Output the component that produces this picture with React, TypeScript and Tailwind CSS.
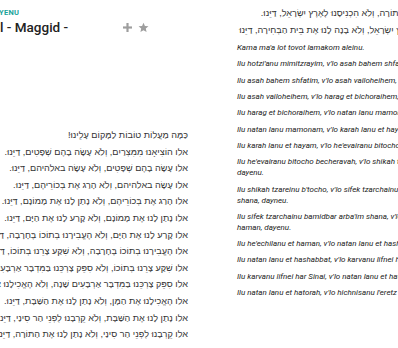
import React from "react"

const hebrewMain = [
  "כַּמָּה מַעֲלוֹת טוֹבוֹת לַמָּקוֹם עָלֵינוּ!",
  "אלו הוֹצִיאָנוּ מִמִּצְרַיִם, וְלֹא עָשָׂה בָהֶם שְׁפָטִים, דַּיֵּנוּ.",
  "אלו עָשָׂה בָהֶם שְׁפָטִים, וְלֹא עָשָׂה באלהיהם, דַּיֵּנוּ.",
  "אלו עָשָׂה באלהיהם, וְלֹא הָרַג אֶת בְּכוֹרֵיהֶם, דַּיֵּנוּ.",
  "אלו הָרַג אֶת בְּכוֹרֵיהֶם, וְלֹא נָתַן לָנוּ אֶת מָמוֹנָם, דַּיֵּנוּ.",
  "אלו נָתַן לָנוּ אֶת מָמוֹנָם, וְלֹא קָרַע לָנוּ אֶת הַיָּם, דַּיֵּנוּ.",
  "אלו קָרַע לָנוּ אֶת הַיָּם, וְלֹא הֶעֱבִירָנוּ בְתוֹכוֹ בֶּחָרָבָה, דַּיֵּנוּ.",
  "אלו הֶעֱבִירָנוּ בְתוֹכוֹ בֶּחָרָבָה, וְלֹא שִׁקַּע צָרֵנוּ בְּתוֹכוֹ, דַּיֵּנוּ.",
  "אלו שִׁקַּע צָרֵנוּ בְּתוֹכוֹ, וְלֹא סִפֵּק צָרְכֵּנוּ בַּמִּדְבָּר אַרְבָּעִים שָׁנָה, דַּיֵּנוּ.",
  "אלו סִפֵּק צָרְכֵּנוּ בַּמִּדְבָּר אַרְבָּעִים שָׁנָה, וְלֹא הֶאֱכִילָנוּ אֶת הַמָּן, דַּיֵּנוּ.",
  "אלו הֶאֱכִילָנוּ אֶת הַמָּן, וְלֹא נָתַן לָנוּ אֶת הַשַּׁבָּת, דַּיֵּנוּ.",
  "אלו נָתַן לָנוּ אֶת הַשַּׁבָּת, וְלֹא קֵרְבָנוּ לִפְנֵי הַר סִינַי, דַּיֵּנוּ.",
  "אלו קֵרְבָנוּ לִפְנֵי הַר סִינַי, וְלֹא נָתַן לָנוּ אֶת הַתּוֹרָה, דַּיֵּנוּ.",
]

const hebrewRest = [
  "אלו נָתַן לָנוּ אֶת הַתּוֹרָה, וְלֹא הִכְנִיסָנוּ לְאֶרֶץ יִשְׂרָאֵל, דַּיֵּנוּ.",
  "אלו הִכְנִיסָנוּ לְאֶרֶץ יִשְׂרָאֵל, וְלֹא בָנָה לָנוּ אֶת בֵּית הַבְּחִירָה, דַּיֵּנוּ",
]

const transliteration = [
  "Kama ma'a lot tovot lamakom aleinu.",
  "Ilu hotzi'anu mimitzrayim, v'lo asah bahem shfatim, dayenu.",
  "Ilu asah bahem shfatim, v'lo asah vailoheihem, dayenu.",
  "Ilu asah vailoheihem, v'lo harag et bichoraihem, dayenu.",
  "Ilu harag et bichoraihem, v'lo natan lanu mamonam, dayenu.",
  "Ilu natan lanu mamonam, v'lo karah lanu et hayam, dayenu.",
  "Ilu karah lanu et hayam, v'lo he'evairanu bitocho becheravah, dayenu.",
  "Ilu he'evairanu bitocho becheravah, v'lo shikah tzareinu b'tocho, dayenu.",
  "Ilu shikah tzareinu b'tocho, v'lo sifek tzarchainu b'midbar arba'im shana, dayneu.",
  "Ilu sifek tzarchainu bamidbar arba'im shana, v'lo he'echilanu et haman, dayenu.",
  "Ilu he'echilanu et haman, v'lo natan lanu et hashabbat, dayenu.",
  "Ilu natan lanu et hashabbat, v'lo karvanu lifnei har Sinai, dayenu.",
  "Ilu karvanu lifnei har Sinai, v'lo natan lanu et hatorah, dayenu.",
  "Ilu natan lanu et hatorah, v'lo hichnisanu l'eretz Yisrael, dayenu.",
]

function PlusIcon() {
  return (
    <svg width="9" height="9" viewBox="0 0 10 10" fill="#9e9e9e">
      <rect x="3.8" y="0" width="2.4" height="10" />
      <rect x="0" y="3.8" width="10" height="2.4" />
    </svg>
  )
}

function StarIcon() {
  return (
    <svg width="11" height="11" viewBox="0 0 24 24" fill="#9e9e9e">
      <path d="M12 1.5l3.1 7.1 7.7.7-5.8 5.1 1.7 7.6L12 18l-6.7 4 1.7-7.6-5.8-5.1 7.7-.7z" />
    </svg>
  )
}

export default function App() {
  return (
    <div className="h-[348px] w-[398px] overflow-hidden bg-white">
      <div className="-ml-[61px] flex w-[800px]">
        <section className="w-[273px] shrink-0 pt-[8px]">
          <div className="font-['Roboto',sans-serif] text-[7.5px] leading-[10px] font-bold tracking-[0.3px] text-[#1aa39a] uppercase">
            HAGGADAH · DAYENU
          </div>
          <div className="mt-[1px] flex w-[210px] items-center justify-between">
            <h1 className="font-['Roboto',sans-serif] text-[13.5px] leading-[16px] font-medium text-[#222]">
              Traditional - Maggid -
            </h1>
            <div className="flex items-center gap-[6px]">
              <PlusIcon />
              <StarIcon />
            </div>
          </div>
          <div dir="rtl" className="mt-[92px] pr-[24px] text-right font-['Liberation_Sans',sans-serif] text-[9.1px] leading-[16.6px] text-[#333]">
            {hebrewMain.map((line) => (
              <p key={line} className="whitespace-nowrap">
                {line}
              </p>
            ))}
          </div>
        </section>
        <section className="ml-[24px] w-[239px] shrink-0 pt-[5px]">
          <div dir="rtl" className="overflow-hidden pr-[13px] text-right font-['Liberation_Sans',sans-serif] text-[9.1px] leading-[16.6px] text-[#333]">
            {hebrewRest.map((line) => (
              <p key={line} className="whitespace-nowrap">
                {line}
              </p>
            ))}
          </div>
          <div className="mt-[4px] flex flex-col gap-[5.3px] pl-[1px] font-['Roboto',sans-serif] text-[8px] leading-[11px] text-[#222] italic">
            {transliteration.map((line) => (
              <p key={line}>{line}</p>
            ))}
          </div>
        </section>
      </div>
    </div>
  )
}
